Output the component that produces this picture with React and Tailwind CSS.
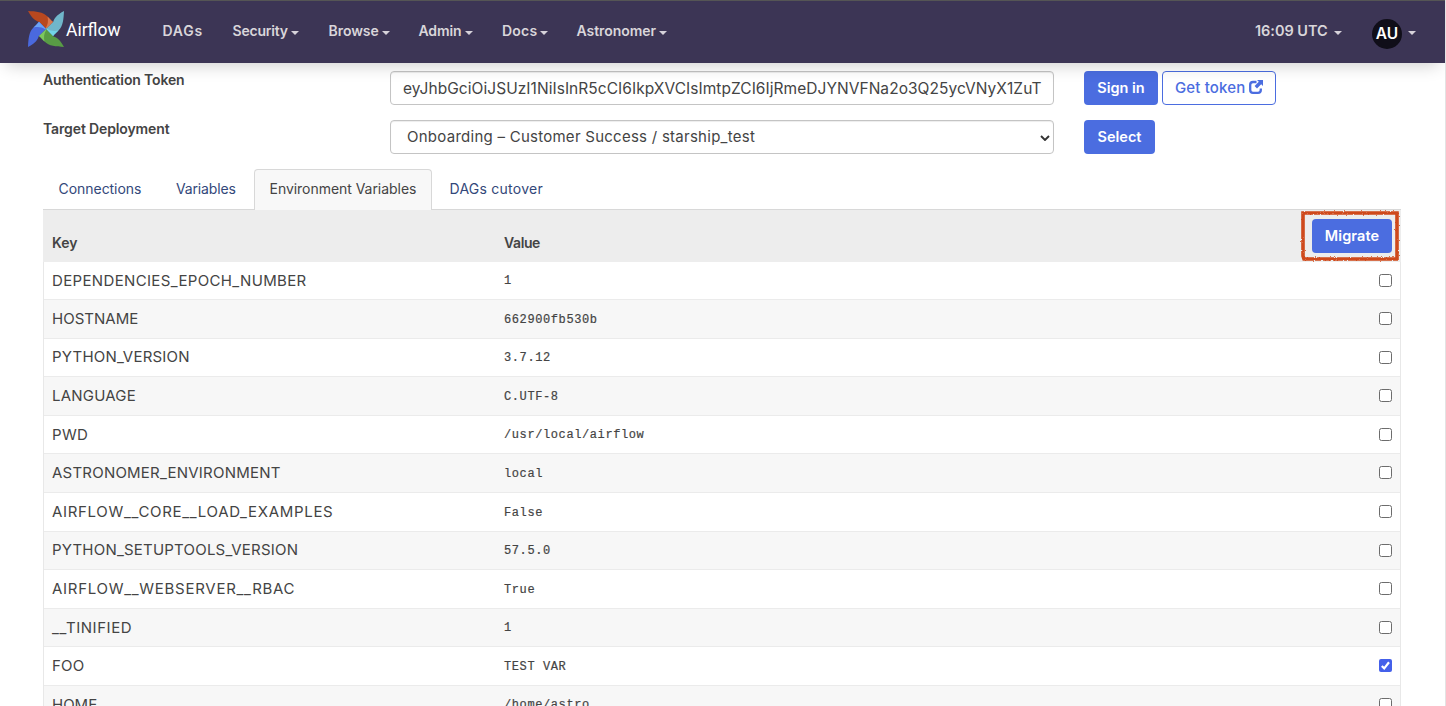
import React from 'react';

const TOKEN = 'eyJhbGciOiJSUzI1NiIsInR5cCI6IkpXVCIsImtpZCI6IjRmeDJYNVFNa2o3Q25ycVNyX1ZuT';

const NAV = [
  { label: 'DAGs', box: 'w-[70px] tracking-[0.8px]' },
  { label: 'Security', box: 'w-[96px] tracking-[-0.2px]', caret: true },
  { label: 'Browse', box: 'w-[90px] tracking-[-0.05px]', caret: true },
  { label: 'Admin', box: 'w-[83.5px] tracking-[-0.1px]', caret: true },
  { label: 'Docs', box: 'w-[74.5px] tracking-[0.2px]', caret: true },
  { label: 'Astronomer', box: 'w-[100px] tracking-[-0.05px]', caret: true },
];

const ROWS = [
  ['DEPENDENCIES_EPOCH_NUMBER', '1', 'tracking-[0.35px]'],
  ['HOSTNAME', '662900fb530b', 'tracking-[0.02px]'],
  ['PYTHON_VERSION', '3.7.12', 'tracking-[0.22px]'],
  ['LANGUAGE', 'C.UTF-8', 'tracking-[0.22px]'],
  ['PWD', '/usr/local/airflow', 'tracking-[0.3px]'],
  ['ASTRONOMER_ENVIRONMENT', 'local', 'tracking-[0.22px]'],
  ['AIRFLOW__CORE__LOAD_EXAMPLES', 'False', 'tracking-[0.68px]'],
  ['PYTHON_SETUPTOOLS_VERSION', '57.5.0', 'tracking-[0.21px]'],
  ['AIRFLOW__WEBSERVER__RBAC', 'True', 'tracking-[0.72px]'],
  ['__TINIFIED', '1', 'tracking-[0.55px]'],
  ['FOO', 'TEST VAR', 'tracking-[0.2px]', true],
  ['HOME', '/home/astro', 'tracking-[0px]'],
];

const BLADES = [
  ['#b9481f', '#d9764c', 0],
  ['#70b6ca', '#72d3e8', 90],
  ['#589c45', '#7cc85e', 180],
  ['#4a69de', '#6ba2f6', 270],
];

function Logo() {
  return (
    <svg className="size-9 shrink-0" viewBox="0 0 36 36">
      {BLADES.map(([fill, light, angle]) => (
        <g key={angle} transform={`rotate(${angle} 18 18)`}>
          <path fill={fill} d="M0 0C8 .4 15 .8 19.500 5.500C21.500 7.600 23.500 9.800 25.200 11L18 18L11 10.800C7.500 9.800 4.500 8.200 0 0Z" />
          <path fill={light} d="M19.500 5.500C21.500 7.600 23.500 9.800 25.200 11L18 18L17.500 17.500C20 13.500 20.500 10 19.500 5.500Z" />
        </g>
      ))}
    </svg>
  );
}

function Caret() {
  return <span className="mt-[3px] block size-0 border-x-4 border-t-4 border-x-transparent border-t-[#d6d2da]" />;
}

function Button({ children, className }) {
  return (
    <button className={`flex h-[34px] items-center justify-center rounded-[4px] bg-[#4b6de0] text-[14.5px] font-semibold text-white ${className}`}>
      {children}
    </button>
  );
}

function Checkbox({ checked }) {
  if (checked) {
    return (
      <svg className="mb-[0.6px] size-[13px]" viewBox="0 0 13 13">
        <rect width="13" height="13" rx="2" fill="#4460ea" />
        <path d="M2.800 7L5.200 9.400L10 3.300" fill="none" stroke="#fff" strokeWidth="2.200" />
      </svg>
    );
  }
  return <span className="mb-[0.6px] block size-[13px] rounded-[2.5px] border border-[#6c6c6c] bg-white" />;
}

export default function App() {
  return (
    <div className="h-[706px] w-[1446px] overflow-hidden border-r border-[#e3e3e3] bg-white font-['Inter','Liberation_Sans',sans-serif] text-[#444]">
      <nav className="relative z-10 flex h-[63px] items-center border-t border-[#555] bg-[#3c3555] pl-7 text-[14px] font-semibold text-[#d9d6da] shadow-[0_8px_16px_-6px_rgba(0,0,0,0.2)]">
        <div className="flex h-full w-[134.5px] items-start pt-[10px]">
          <Logo />
          <span className="ml-[2px] mt-[7px] font-['Roboto',sans-serif] text-[17.5px] leading-[24px] font-normal tracking-[0px] text-white">Airflow</span>
        </div>
        <div className="mb-[2px] flex flex-1">
          {NAV.map((n) => (
            <div key={n.label} className={`flex items-center gap-[3px] leading-5 ${n.box}`}>
              {n.label}
              {n.caret && <Caret />}
            </div>
          ))}
        </div>
        <div className="mb-[2px] flex w-[117px] items-center gap-[6px] text-[14.5px] tracking-[-0.03px]">
          16:09 UTC
          <Caret />
        </div>
        <div className="mt-[3px] flex w-[73px] items-center gap-[6px]">
          <span className="flex size-[30px] items-center justify-center rounded-full bg-[#100e19] text-[15.5px] text-white">AU</span>
          <span className="-mt-[4px]"><Caret /></span>
        </div>
      </nav>

      <main className="ml-[43px] w-[1358px] pt-2">
        <div className="flex h-[49px] items-start">
          <label className="w-[347px] text-[14px] leading-[17px] font-semibold tracking-[-0.15px]">Authentication Token</label>
          <div className="flex h-[34px] w-[664px] items-center overflow-hidden rounded-[4px] border border-[#c4c4c4] px-3 pt-px text-[15.5px] tracking-[0.05px] whitespace-nowrap shadow-[inset_0_1px_1px_rgba(0,0,0,0.075)]">{TOKEN}</div>
          <Button className="ml-[30px] w-[74px]">Sign in</Button>
          <button className="ml-1 flex h-[34px] w-[114px] items-center gap-[4px] rounded-[4px] border border-[#4b6de0] pl-3 text-[15px] font-medium tracking-[0.15px] text-[#4b6de0]">
            Get token
            <svg className="mb-[2px] size-[14px]" viewBox="0 0 14 14">
              <path d="M7.500 2H4Q1.200 2 1.200 4.800V10Q1.200 12.800 4 12.800H9Q11.800 12.800 11.800 10V8.500" fill="none" stroke="currentColor" strokeWidth="2.300" />
              <path d="M8 0H14V6L12.200 4.200L8 8.400L5.600 6L9.800 1.800Z" fill="currentColor" />
            </svg>
          </button>
        </div>
        <div className="flex h-[49px] items-start">
          <label className="w-[347px] text-[14px] leading-[17px] font-semibold tracking-[-0.13px]">Target Deployment</label>
          <div className="flex h-[34px] w-[664px] items-center justify-between rounded-[4px] border border-[#c4c4c4] pt-px pr-[3px] pl-4 text-[15px] tracking-[0.26px] whitespace-nowrap shadow-[inset_0_1px_1px_rgba(0,0,0,0.075)]">
            Onboarding – Customer Success / starship_test
            <svg className="h-[6px] w-[10px]" viewBox="0 0 10 6">
              <path d="M1 1L5 5L9 1" fill="none" stroke="#333" strokeWidth="1.9" />
            </svg>
          </div>
          <Button className="ml-[30px] w-[71px]">Select</Button>
        </div>

        <div className="flex h-[41px] border-b border-[#d8d8d8] text-[14px] leading-[40px] text-[#33487a]">
          <span className="w-[117px] pl-[15.5px] tracking-[-0.04px]">Connections</span>
          <span className="w-[94px] pl-4 tracking-[-0.15px]">Variables</span>
          <span className="h-[41px] w-[178px] rounded-t-[4px] border border-b-0 border-[#d8d8d8] bg-[#f8f8f8] pl-[14.5px] leading-[38px] tracking-[-0.04px] text-[#444]">Environment Variables</span>
          <span className="pl-[17.5px] tracking-[0.25px]">DAGs cutover</span>
        </div>

        <div className="flex h-[52px] items-start bg-[#ededed] pl-[9px] text-[14px] font-semibold">
          <span className="w-[452px] pt-[23px] leading-5 tracking-[0px]">Key</span>
          <span className="flex-1 pt-[23px] leading-5 tracking-[-0.4px]">Value</span>
          <div className="relative mt-[9px] mr-[9px]">
            <Button className="w-[80px] tracking-[0.1px]">Migrate</Button>
            <svg className="absolute -top-[10px] -left-[13px] h-[54px] w-[102px]" viewBox="0 0 102 54">
              <filter id="crayon" x="-5%" y="-10%" width="110%" height="120%">
                <feTurbulence type="fractalNoise" baseFrequency="0.7" numOctaves="2" seed="4" />
                <feDisplacementMap in="SourceGraphic" scale="2.500" xChannelSelector="R" yChannelSelector="G" />
              </filter>
              <path d="M4 4H98V50H5L4 47Z" fill="none" stroke="#cf4a1d" strokeWidth="3.600" filter="url(#crayon)" />
            </svg>
          </div>
        </div>

        <div className="border-x border-[#e8e8e8]">
          {ROWS.map(([key, value, tracking, checked], i) => (
            <div
              key={key}
              className={`flex items-center pr-2 pl-2 ${i === 0 ? 'h-[37.1px]' : 'h-[38.58px] border-t border-[#ebebeb]'} ${i % 2 ? 'bg-[#f7f7f7]' : 'bg-white'}`}
            >
              <span className={`w-[452px] text-[15px] leading-5 ${tracking}`}>{key}</span>
              <span className="flex-1 pt-[1.6px] font-['Liberation_Mono',monospace] text-[12px] leading-5 tracking-[0.6px] whitespace-pre [-webkit-text-stroke:0.2px_#444]">{value}</span>
              <Checkbox checked={checked} />
            </div>
          ))}
        </div>
      </main>
    </div>
  );
}
